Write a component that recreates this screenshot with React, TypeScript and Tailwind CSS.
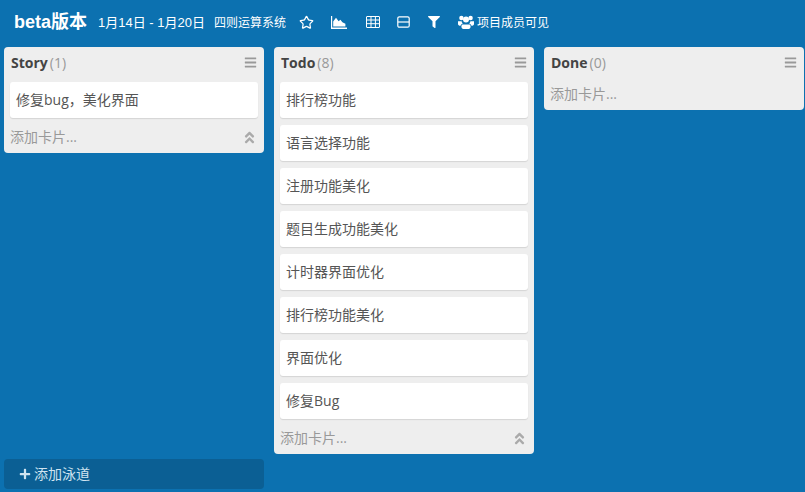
import { Star } from "lucide-react";
import { FaPlus, FaAngleDoubleUp, FaFilter, FaBars } from "react-icons/fa";

const lists = [
  { name: "Story", cards: ["修复bug，美化界面"], total: 1, collapse: true },
  {
    name: "Todo",
    cards: ["排行榜功能", "语言选择功能", "注册功能美化", "题目生成功能美化", "计时器界面优化", "排行榜功能美化", "界面优化", "修复Bug"],
    total: 8,
    collapse: true,
  },
  { name: "Done", cards: [], total: 0, collapse: false },
];

const font = "font-['Open_Sans','Noto_Sans_CJK_SC',sans-serif]";

function AreaIcon() {
  return (
    <svg width="16" height="13" viewBox="0 0 16 13" fill="white">
      <path d="M0 0h1.2v11.6H16V13H0z" />
      <path d="M2.2 10.6V5.5L5 1.8l2.6 3.4 1.8-1.4 2 2.4 3 1.6v2.8z" />
    </svg>
  );
}

function TableIcon() {
  return (
    <svg width="14" height="12" viewBox="0 0 14 12" fill="none" stroke="white" strokeWidth="1">
      <rect x="0.5" y="0.5" width="13" height="11" rx="0.5" />
      <path d="M0.5 4h13M0.5 7.7h13M5 0.5v11M9.4 0.5v11" />
    </svg>
  );
}

function SplitIcon() {
  return (
    <svg width="13" height="12" viewBox="0 0 13 12" fill="none" stroke="white" strokeWidth="1.2">
      <rect x="0.8" y="0.8" width="11.4" height="10.4" rx="1.5" />
      <path d="M0.8 6h11.4" />
    </svg>
  );
}

function UsersIcon() {
  return (
    <svg width="16" height="14" viewBox="0 0 16 14" fill="white">
      <circle cx="3.4" cy="3" r="2.2" />
      <circle cx="12.6" cy="3" r="2.2" />
      <circle cx="8" cy="4.4" r="3" />
      <path d="M0 6.2h3.6a4 4 0 0 0 1.2 2.4C3.4 9 2.8 10 2.6 10.8 1 10.8 0 10.2 0 9z" />
      <path d="M16 6.2h-3.6a4 4 0 0 1-1.2 2.4c1.4.4 2 1.4 2.2 2.2 1.6 0 2.6-.6 2.6-1.8z" />
      <path d="M4.6 9.4h6.8c.8 0 1.2 1 1.2 2.2 0 1.4-.8 2.4-2 2.4H5.4c-1.2 0-2-1-2-2.4 0-1.2.4-2.2 1.2-2.2z" />
    </svg>
  );
}

function ListCol({ list }: { list: (typeof lists)[number] }) {
  return (
    <div className="w-[260px] shrink-0 self-start rounded-[4px] bg-[#eeeeee] px-[6px] pb-[4px]">
      <div className="mb-[5px] flex h-[30px] items-center justify-between pl-[1px] pr-[1px]">
        <div className="flex items-baseline gap-[2px] text-[14px]">
          <span className="font-bold text-[#444444]">{list.name}</span>
          <span className="text-[#999999]">({list.total})</span>
        </div>
        <FaBars className="text-[13px] text-[#999999]" />
      </div>
      {list.cards.map((c) => (
        <div
          key={c}
          className="mb-[7px] flex h-[36px] items-center rounded-[3px] bg-white pb-[2px] pl-[6px] text-[14px] text-[#555555] shadow-[0_1px_1px_#d4d4d4]"
        >
          {c}
        </div>
      ))}
      <div className="flex h-[24px] items-center justify-between pb-[2px] text-[14px] text-[#999999]">
        <span>添加卡片...</span>
        {list.collapse && <FaAngleDoubleUp className="mr-[1px] mt-[2px] text-[15px] text-[#aaaaaa]" />}
      </div>
    </div>
  );
}

export default function App() {
  return (
    <div className={`flex h-[492px] w-[805px] flex-col overflow-hidden bg-[#0c71b0] ${font}`}>
      <header className="mb-[3px] flex h-[44px] shrink-0 items-center pl-[14px] text-white">
        <h1 className="font-['Liberation_Sans','Noto_Sans_CJK_SC',sans-serif] text-[18px] font-bold">beta版本</h1>
        <span className="ml-[11px] mt-[2px] font-['Liberation_Sans','Noto_Sans_CJK_SC',sans-serif] text-[13px]">1月14日 - 1月20日</span>
        <span className="ml-[9px] mt-[2px] text-[12px]">四则运算系统</span>
        <Star className="ml-[13px] h-[15px] w-[15px]" strokeWidth={2} />
        <span className="ml-[17px]"><AreaIcon /></span>
        <span className="ml-[19px]"><TableIcon /></span>
        <span className="ml-[17px]"><SplitIcon /></span>
        <FaFilter className="ml-[18px] text-[12px]" />
        <span className="ml-[18px]"><UsersIcon /></span>
        <span className="ml-[3px] mt-[2px] text-[12px]">项目成员可见</span>
      </header>
      <main className="flex flex-1 items-start gap-[10px] pl-[4px]">
        {lists.map((l) => (
          <ListCol key={l.name} list={l} />
        ))}
      </main>
      <div className="mb-[3px] ml-[4px] flex h-[30px] w-[260px] items-center gap-[3px] rounded-[4px] bg-[#0b5f94] pb-[2px] pl-[15px] text-[14px] text-[#cfe3f0]">
        <FaPlus className="mt-[2px] text-[12px]" />
        添加泳道
      </div>
    </div>
  );
}
